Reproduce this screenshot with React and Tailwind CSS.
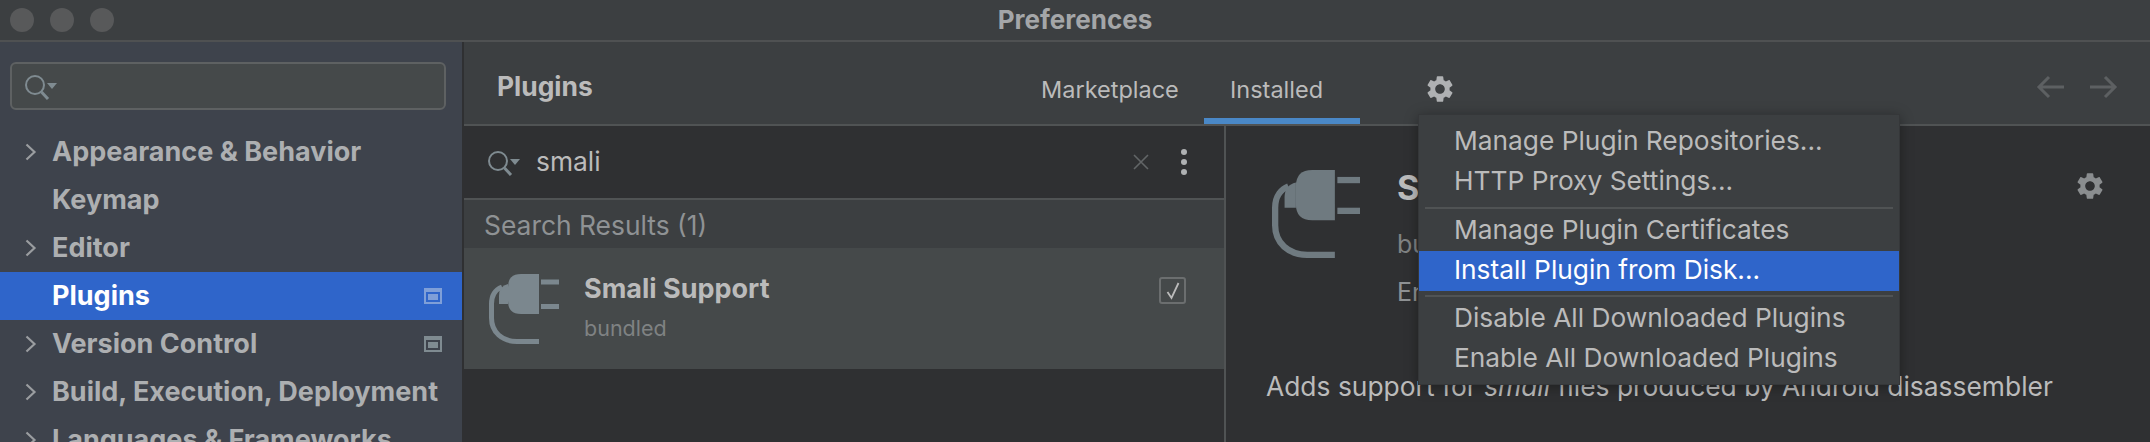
import React from 'react';

const sidebarItems = [
    { label: 'Appearance & Behavior', arrow: true },
    { label: 'Keymap' },
    { label: 'Editor', arrow: true },
    { label: 'Plugins', selected: true, badge: true },
    { label: 'Version Control', arrow: true, badge: true },
    { label: 'Build, Execution, Deployment', arrow: true },
    { label: 'Languages & Frameworks', arrow: true },
];

const menuGroups = [
    ['Manage Plugin Repositories...', 'HTTP Proxy Settings...'],
    ['Manage Plugin Certificates', 'Install Plugin from Disk...'],
    ['Disable All Downloaded Plugins', 'Enable All Downloaded Plugins'],
];

const SearchIcon = ({ className }) => (
    <svg viewBox="0 0 34 28" className={className} fill="none">
        <circle cx="11" cy="11" r="9" stroke="#7f8b91" strokeWidth="2" />
        <path d="M17.5 18 L24 25" stroke="#7f8b91" strokeWidth="3" />
        <path d="M23 9 H33 L28 15 Z" fill="#7f8b91" />
    </svg>
);

const PlugIcon = ({ className, color }) => (
    <svg viewBox="0 0 70 70" className={className} fill="none">
        <path d="M50 0 H32 Q19 0 19 13 V27 Q19 40 32 40 H50 Z" fill={color} />
        <path d="M19 10 Q10 12 10 22 V30 H19 Z" fill={color} />
        <rect x="52" y="5.5" width="18" height="5" fill={color} />
        <rect x="52" y="30" width="18" height="5" fill={color} />
        <path d="M13 13 C8 15 2.5 20 2.5 30 V44 C2.5 58 13 67.5 28 67.5 H50" stroke={color} strokeWidth="5" />
    </svg>
);

const GearIcon = ({ className }) => (
    <svg viewBox="0 0 24 24" className={className} fill="currentColor">
        <path d="M19.14 12.94c.04-.3.06-.61.06-.94 0-.32-.02-.64-.07-.94l2.03-1.58c.18-.14.23-.41.12-.61l-1.92-3.32c-.12-.22-.37-.29-.59-.22l-2.39.96c-.5-.38-1.03-.7-1.62-.94l-.36-2.54c-.04-.24-.24-.41-.48-.41h-3.84c-.24 0-.43.17-.47.41l-.36 2.54c-.59.24-1.13.57-1.62.94l-2.39-.96c-.22-.08-.47 0-.59.22L2.74 8.87c-.12.21-.08.47.12.61l2.03 1.58c-.05.3-.09.63-.09.94s.02.64.07.94l-2.03 1.58c-.18.14-.23.41-.12.61l1.92 3.32c.12.22.37.29.59.22l2.39-.96c.5.38 1.03.7 1.62.94l.36 2.54c.05.24.24.41.48.41h3.84c.24 0 .44-.17.47-.41l.36-2.54c.59-.24 1.13-.56 1.62-.94l2.39.96c.22.08.47 0 .59-.22l1.92-3.32c.12-.22.07-.47-.12-.61l-2.01-1.58zM12 15.6c-1.98 0-3.6-1.62-3.6-3.6s1.62-3.6 3.6-3.6 3.6 1.62 3.6 3.6-1.62 3.6-3.6 3.6z" />
    </svg>
);

const ProjectBadge = ({ selected }) => (
    <svg viewBox="0 0 18 16" className="w-[18px] h-4">
        <rect width="18" height="16" fill={selected ? '#7f9fd8' : '#7f8b91'} />
        <rect x="2" y="4" width="14" height="10" fill={selected ? '#2f65ca' : '#3e434c'} />
        <rect x="4" y="6" width="10" height="6" fill={selected ? '#7f9fd8' : '#7f8b91'} />
    </svg>
);

const SidebarRow = ({ item }) => (
    <div className={`flex items-center h-12 shrink-0 pr-5 ${item.selected ? 'bg-[#2f65ca] text-white' : 'text-[#adafb1]'}`}>
        <div className="w-[52px] shrink-0 pl-[25px]">
            {item.arrow && (
                <svg viewBox="0 0 12 18" className="w-3 h-[18px]" fill="none">
                    <path d="M1.5 1.5 L9.5 9 L1.5 16.5" stroke="#9a9da0" strokeWidth="2.2" />
                </svg>
            )}
        </div>
        <span className="text-[27px] font-bold whitespace-nowrap">{item.label}</span>
        {item.badge && <span className="ml-auto flex"><ProjectBadge selected={item.selected} /></span>}
    </div>
);

const PluginMenu = () => (
    <div className="absolute left-[1418px] top-[114px] w-[482px] h-[271px] py-[7px] bg-[#3c3f41] border border-[#353739] shadow-[0_2px_12px_rgba(0,0,0,0.35)] text-[26.3px] text-[#bbbbbb]">
        {menuGroups.map((group, i) => (
            <div key={i}>
                {i > 0 && <div className={`mx-[6px] h-[2px] bg-[#505354] ${i === 1 ? 'mt-[5px] mb-[2px]' : 'mt-[4px] mb-[2px]'}`} />}
                {group.map((label) => {
                    const active = label.startsWith('Install');
                    return (
                        <div key={label} className={`flex items-center h-10 pl-[35px] pb-[2px] whitespace-nowrap ${active ? 'bg-[#2f65ca] text-white' : ''}`}>
                            {label}
                        </div>
                    );
                })}
            </div>
        ))}
    </div>
);

export default function App() {
    return (
        <div className="relative w-[2150px] h-[442px] overflow-hidden bg-[#3c3f41] text-[26.4px] [font-family:Inter,sans-serif]">
            {/* Title bar */}
            <div className="relative flex items-center justify-center h-[42px] pb-[2px] border-b-2 border-[#4f5152] bg-[#3c3f41]">
                <div className="absolute left-[10px] top-2 flex gap-4">
                    <div className="w-6 h-6 rounded-full bg-[#58595a]" />
                    <div className="w-6 h-6 rounded-full bg-[#58595a]" />
                    <div className="w-6 h-6 rounded-full bg-[#58595a]" />
                </div>
                <span className="text-[26px] font-bold text-[#a4a6a8]">Preferences</span>
            </div>

            <div className="flex h-[400px]">
                {/* Settings tree */}
                <div className="w-[464px] shrink-0 border-r-2 border-[#2f3032] bg-[#3e434c] overflow-hidden">
                    <div className="pt-5 pl-[10px] pr-4 pb-[18px]">
                        <div className="flex items-center h-12 pl-3 rounded-md border-2 border-[#5e6162] bg-[#45494a]">
                            <SearchIcon className="w-[34px] h-7 mt-1" />
                        </div>
                    </div>
                    {sidebarItems.map((item) => (
                        <SidebarRow key={item.label} item={item} />
                    ))}
                </div>

                <div className="flex flex-col flex-1 min-w-0">
                    {/* Header and tabs */}
                    <div className="flex h-[84px] shrink-0 items-stretch pl-[33px] pr-[32px] border-b-2 border-[#505354] text-[#bbbbbb]">
                        <div className="w-[517px] pt-[25px] font-bold">Plugins</div>
                        <div className="flex items-center w-[190px] pl-[27px] pt-[14px] text-[23.5px]">Marketplace</div>
                        <div className="relative flex items-center w-[156px] pl-[26px] pt-[14px] text-[23.5px]">
                            Installed
                            <div className="absolute left-0 right-0 bottom-0 h-[6px] bg-[#4a88c7]" />
                        </div>
                        <div className="flex items-center ml-[64px] pt-[12px] text-[#afb1b3]">
                            <GearIcon className="w-8 h-8" />
                        </div>
                        <div className="flex gap-[26px] ml-auto pt-[33px] text-[#5d6062]">
                            <svg viewBox="0 0 28 24" className="w-7 h-6" fill="none" stroke="currentColor" strokeWidth="3">
                                <path d="M28 12 H3 M13 2 L3 12 L13 22" />
                            </svg>
                            <svg viewBox="0 0 28 24" className="w-7 h-6" fill="none" stroke="currentColor" strokeWidth="3">
                                <path d="M0 12 H25 M15 2 L25 12 L15 22" />
                            </svg>
                        </div>
                    </div>

                    <div className="flex flex-1 min-h-0">
                        {/* Plugin list */}
                        <div className="flex flex-col w-[762px] shrink-0 border-r-2 border-[#505354] bg-[#2f3032]">
                            <div className="flex items-center h-[74px] shrink-0 pl-[23px] pr-[37px] border-b-2 border-[#505354] text-[#bbbbbb]">
                                <SearchIcon className="w-[34px] h-7 mt-1" />
                                <span className="ml-[15px]">smali</span>
                                <svg viewBox="0 0 16 16" className="w-4 h-4 ml-auto" fill="none" stroke="#626567" strokeWidth="1.6">
                                    <path d="M1 1 L15 15 M15 1 L1 15" />
                                </svg>
                                <div className="flex flex-col gap-1 ml-[32px]">
                                    <div className="w-[6px] h-[6px] rounded-full bg-[#afb1b3]" />
                                    <div className="w-[6px] h-[6px] rounded-full bg-[#afb1b3]" />
                                    <div className="w-[6px] h-[6px] rounded-full bg-[#afb1b3]" />
                                </div>
                            </div>
                            <div className="flex items-center h-[48px] shrink-0 pl-[20px] pt-1 bg-[#3c3f41] text-[#8f9294]">Search Results (1)</div>
                            <div className="flex items-start h-[121px] shrink-0 pl-[25px] pr-[38px] bg-[#45494a]">
                                <PlugIcon className="w-[70px] h-[70px] mt-[26px]" color="#7b878e" />
                                <div className="ml-[25px] pt-[23px]">
                                    <div className="text-[27px] font-bold leading-[36px] text-[#bbbbbb]">Smali Support</div>
                                    <div className="mt-[3px] leading-[36px] text-[21.5px] text-[#7f8283]">bundled</div>
                                </div>
                                <div className="flex items-center justify-center w-[27px] h-[27px] ml-auto mt-[29px] rounded-[3px] border-2 border-[#6b6e6f]">
                                    <svg viewBox="0 0 14 18" className="w-[14px] h-[18px]" fill="none" stroke="#bbbbbb" strokeWidth="1.8">
                                        <path d="M1.5 10 L5.5 16 L12.5 1" />
                                    </svg>
                                </div>
                            </div>
                        </div>

                        {/* Plugin details */}
                        <div className="flex-1 min-w-0 pl-[46px] pt-[44px] bg-[#2f3032] text-[#bbbbbb]">
                            <div className="flex items-start pr-[44px]">
                                <PlugIcon className="w-[88px] h-[88px]" color="#6f7a80" />
                                <div className="ml-[37px]">
                                    <div className="text-[34px] leading-[36px] font-bold">Smali Support</div>
                                    <div className="mt-[23px] leading-[30px] text-[25px] text-[#7f8283]">bundled</div>
                                    <div className="mt-[18px] leading-[30px] text-[25px] text-[#8f9294]">Enabled</div>
                                </div>
                                <GearIcon className="w-8 h-8 ml-auto text-[#8a8d8f]" />
                            </div>
                            <div className="-ml-[6px] mt-[64px] leading-[30px] whitespace-nowrap">
                                Adds support for <em>smali</em> files produced by Android disassembler
                            </div>
                        </div>
                    </div>
                </div>
            </div>

            <PluginMenu />
        </div>
    );
}
